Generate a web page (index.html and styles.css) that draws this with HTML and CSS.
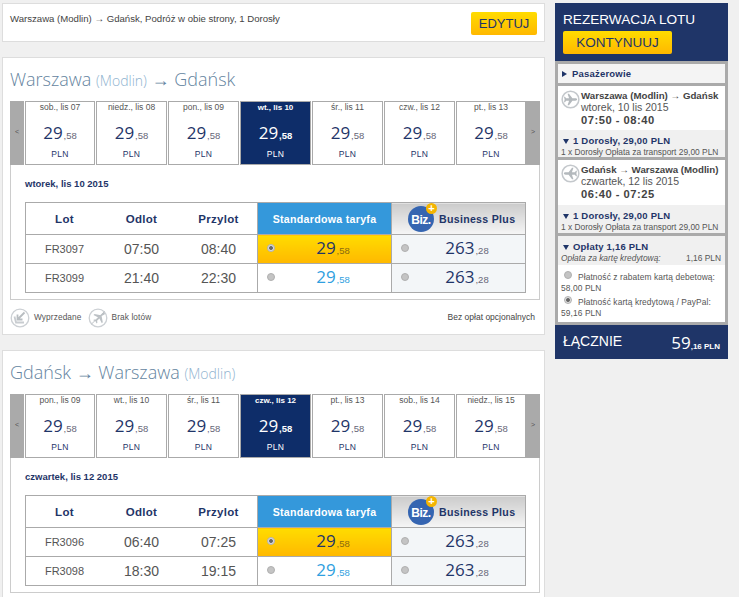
FILE: index.html
```html
<!DOCTYPE html>
<html lang="pl">
<head>
  <meta charset="UTF-8" />
  <title>Rezerwacja lotu</title>
  <link rel="stylesheet" href="styles.css">
</head>
<body>

  <svg class="defs" width="0" height="0">
    <symbol id="plane" viewBox="0 0 20 20">
      <circle cx="10" cy="10" r="8.8" fill="#fff" stroke="#c4c8cc" stroke-width="1.6"/>
      <path fill="#b4b9bd" d="M17 10c0-.7-.9-1.2-2-1.2h-3L8.400 4H6.900l1.600 4.800H5.400L4.200 7.200H3.200l.6 2.800-.6 2.800h1l1.200-1.600h3.100L6.900 16h1.500l3.600-4.800h3c1.100 0 2-.5 2-1.200z"/>
    </symbol>
    <symbol id="sold" viewBox="0 0 20 20">
      <circle cx="10" cy="10" r="8.8" fill="#fff" stroke="#ccd0d4" stroke-width="1.3"/>
      <path fill="none" stroke="#b8bdc1" stroke-width="1.8" d="M14.500 4.500 8 11M7.500 6.500V11.500H12.500"/>
      <path fill="none" stroke="#c8ccd0" stroke-width="1.800" d="M4.500 8.500 6 14.500H14"/>
    </symbol>
    <symbol id="noflight" viewBox="0 0 20 20">
      <circle cx="10" cy="10" r="8.8" fill="#fff" stroke="#ccd0d4" stroke-width="1.3"/>
      <path fill="#bcc1c5" d="M16.500 6.500c.5-.5.5-1.300.1-1.600-.4-.4-1.100-.4-1.600.1l-2.200 2.200L6.500 6l-1 1 4.800 2.400L8 11.700l-2-.3-.8.8 2.300 1.100 1.100 2.300.8-.8-.3-2 2.300-2.300 2.400 4.800 1-1-1.200-6.300z"/>
      <path stroke="#bcc1c5" stroke-width="1" d="M3.500 16 16.500 3.500"/>
    </symbol>
  </svg>

  <div class="page">

    <div class="main">

      <!-- SEARCH SUMMARY -->
      <div class="card summary">
        <span class="summary-text">Warszawa (Modlin) → Gdańsk, Podróż w obie strony, 1 Dorosły</span>
        <a class="btn btn-edit">EDYTUJ</a>
      </div>

      <!-- OUTBOUND -->
      <div class="card route">
        <h2 class="route-title">Warszawa <small>(Modlin)</small> → Gdańsk</h2>

        <div class="strip">
          <div class="strip-arrow">&lt;</div>
          <div class="day"><span class="day-name">sob., lis 07</span><span class="day-price">29<small>,58</small></span><span class="day-cur">PLN</span></div>
          <div class="day"><span class="day-name">niedz., lis 08</span><span class="day-price">29<small>,58</small></span><span class="day-cur">PLN</span></div>
          <div class="day"><span class="day-name">pon., lis 09</span><span class="day-price">29<small>,58</small></span><span class="day-cur">PLN</span></div>
          <div class="day active"><span class="day-name">wt., lis 10</span><span class="day-price">29<small>,58</small></span><span class="day-cur">PLN</span></div>
          <div class="day"><span class="day-name">śr., lis 11</span><span class="day-price">29<small>,58</small></span><span class="day-cur">PLN</span></div>
          <div class="day"><span class="day-name">czw., lis 12</span><span class="day-price">29<small>,58</small></span><span class="day-cur">PLN</span></div>
          <div class="day"><span class="day-name">pt., lis 13</span><span class="day-price">29<small>,58</small></span><span class="day-cur">PLN</span></div>
          <div class="strip-arrow">&gt;</div>
        </div>

        <div class="flights">
          <p class="flights-date">wtorek, lis 10 2015</p>
          <table class="fares">
            <tr>
              <th class="col-info">Lot</th>
              <th class="col-info">Odlot</th>
              <th class="col-info">Przylot</th>
              <th class="head-std">Standardowa taryfa</th>
              <th class="head-biz">
                <div class="biz-head">
                  <span class="biz-logo">Biz.<i class="biz-plus">+</i></span>
                  <span>Business Plus</span>
                </div>
              </th>
            </tr>
            <tr>
              <td class="flight-no">FR3097</td>
              <td class="time">07:50</td>
              <td class="time">08:40</td>
              <td class="fare-std picked"><div class="fare"><span class="radio on"></span><span class="fare-price">29<small>,58</small></span></div></td>
              <td class="fare-biz"><div class="fare"><span class="radio"></span><span class="fare-price">263<small>,28</small></span></div></td>
            </tr>
            <tr>
              <td class="flight-no">FR3099</td>
              <td class="time">21:40</td>
              <td class="time">22:30</td>
              <td class="fare-std"><div class="fare"><span class="radio"></span><span class="fare-price">29<small>,58</small></span></div></td>
              <td class="fare-biz"><div class="fare"><span class="radio"></span><span class="fare-price">263<small>,28</small></span></div></td>
            </tr>
          </table>
        </div>

        <div class="legend">
          <svg class="legend-icon"><use href="#sold"/></svg>
          <span class="legend-label">Wyprzedane</span>
          <svg class="legend-icon"><use href="#noflight"/></svg>
          <span class="legend-label">Brak lotów</span>
          <span class="legend-note">Bez opłat opcjonalnych</span>
        </div>
      </div>

      <!-- RETURN -->
      <div class="card route route-last">
        <h2 class="route-title">Gdańsk → Warszawa <small>(Modlin)</small></h2>

        <div class="strip">
          <div class="strip-arrow">&lt;</div>
          <div class="day"><span class="day-name">pon., lis 09</span><span class="day-price">29<small>,58</small></span><span class="day-cur">PLN</span></div>
          <div class="day"><span class="day-name">wt., lis 10</span><span class="day-price">29<small>,58</small></span><span class="day-cur">PLN</span></div>
          <div class="day"><span class="day-name">śr., lis 11</span><span class="day-price">29<small>,58</small></span><span class="day-cur">PLN</span></div>
          <div class="day active"><span class="day-name">czw., lis 12</span><span class="day-price">29<small>,58</small></span><span class="day-cur">PLN</span></div>
          <div class="day"><span class="day-name">pt., lis 13</span><span class="day-price">29<small>,58</small></span><span class="day-cur">PLN</span></div>
          <div class="day"><span class="day-name">sob., lis 14</span><span class="day-price">29<small>,58</small></span><span class="day-cur">PLN</span></div>
          <div class="day"><span class="day-name">niedz., lis 15</span><span class="day-price">29<small>,58</small></span><span class="day-cur">PLN</span></div>
          <div class="strip-arrow">&gt;</div>
        </div>

        <div class="flights">
          <p class="flights-date">czwartek, lis 12 2015</p>
          <table class="fares">
            <tr>
              <th class="col-info">Lot</th>
              <th class="col-info">Odlot</th>
              <th class="col-info">Przylot</th>
              <th class="head-std">Standardowa taryfa</th>
              <th class="head-biz">
                <div class="biz-head">
                  <span class="biz-logo">Biz.<i class="biz-plus">+</i></span>
                  <span>Business Plus</span>
                </div>
              </th>
            </tr>
            <tr>
              <td class="flight-no">FR3096</td>
              <td class="time">06:40</td>
              <td class="time">07:25</td>
              <td class="fare-std picked"><div class="fare"><span class="radio on"></span><span class="fare-price">29<small>,58</small></span></div></td>
              <td class="fare-biz"><div class="fare"><span class="radio"></span><span class="fare-price">263<small>,28</small></span></div></td>
            </tr>
            <tr>
              <td class="flight-no">FR3098</td>
              <td class="time">18:30</td>
              <td class="time">19:15</td>
              <td class="fare-std"><div class="fare"><span class="radio"></span><span class="fare-price">29<small>,58</small></span></div></td>
              <td class="fare-biz"><div class="fare"><span class="radio"></span><span class="fare-price">263<small>,28</small></span></div></td>
            </tr>
          </table>
        </div>
      </div>

    </div>

    <!-- BOOKING SIDEBAR -->
    <div class="side">
      <div class="side-head">
        <div class="side-title">REZERWACJA LOTU</div>
        <a class="btn btn-next">KONTYNUUJ</a>
      </div>

      <div class="side-body">
        <div class="side-pax"><span class="tri-right"></span>Pasażerowie</div>

        <div class="leg">
          <div class="leg-top">
            <svg class="leg-icon"><use href="#plane"/></svg>
            <div>
              <div class="leg-route">Warszawa (Modlin) → Gdańsk</div>
              <div class="leg-date">wtorek, 10 lis 2015</div>
              <div class="leg-time">07:50 - 08:40</div>
            </div>
          </div>
          <div class="leg-price">
            <div class="price-head"><span class="tri-down"></span>1 Dorosły, 29,00 PLN</div>
            <div class="price-sub">1 x Dorosły Opłata za transport 29,00 PLN</div>
          </div>
        </div>

        <div class="leg">
          <div class="leg-top leg-top-tall">
            <svg class="leg-icon flip"><use href="#plane"/></svg>
            <div>
              <div class="leg-route">Gdańsk → Warszawa (Modlin)</div>
              <div class="leg-date">czwartek, 12 lis 2015</div>
              <div class="leg-time">06:40 - 07:25</div>
            </div>
          </div>
          <div class="leg-price leg-price-tall">
            <div class="price-head"><span class="tri-down"></span>1 Dorosły, 29,00 PLN</div>
            <div class="price-sub">1 x Dorosły Opłata za transport 29,00 PLN</div>
          </div>
        </div>

        <div class="fees">
          <div class="price-head"><span class="tri-down"></span>Opłaty 1,16 PLN</div>
          <div class="fees-row"><em>Opłata za kartę kredytową:</em><span>1,16 PLN</span></div>
          <div class="pay">
            <div class="pay-line"><span class="radio"></span>Płatność z rabatem kartą debetową:</div>
            <div class="pay-amount">58,00 PLN</div>
            <div class="pay-line pay-line-next"><span class="radio on"></span>Płatność kartą kredytową / PayPal:</div>
            <div class="pay-amount">59,16 PLN</div>
          </div>
        </div>
      </div>

      <div class="total">
        <span class="total-label">ŁĄCZNIE</span>
        <span class="total-price">59<small>,16 PLN</small></span>
      </div>
    </div>

  </div>

</body>
</html>
```

FILE: styles.css
```css
/* ------------------------------
   GENERAL
-------------------------------*/
html, body {
  margin: 0;
  padding: 0;
  height: 597px;
  overflow: hidden;
}
body {
  background: #f0f0f0;
  font-family: "Liberation Sans", Arial, sans-serif;
  color: #555;
}
.defs {
  position: absolute;
}
.page {
  display: flex;
  align-items: flex-start;
  gap: 10px;
  padding: 3px 0 0 2px;
}
.main {
  width: 543px;
  display: flex;
  flex-direction: column;
  flex-shrink: 0;
}
.card {
  background: #fff;
  border: 1px solid #ddd;
  box-sizing: border-box;
}

/* ---------------
   BUTTONS
   ---------------*/
.btn {
  display: block;
  box-sizing: border-box;
  height: 23px;
  line-height: 24px;
  text-align: center;
  color: #1f3568;
  border-radius: 2px;
  background: linear-gradient(#ffdc00, #ffb800);
}

/* ---------------
   SUMMARY
   ---------------*/
.summary {
  height: 39px;
  display: flex;
  justify-content: space-between;
  padding: 8px 7px 0 7px;
  margin-bottom: 15px;
}
.summary-text {
  font-size: 9.600px;
  line-height: 13px;
  color: #444;
}
.btn-edit {
  width: 66px;
  font-size: 13px;
}

/* ---------------
   ROUTE CARD
   ---------------*/
.route {
  height: 278px;
  padding: 0 4px 0 7px;
  margin-bottom: 15px;
}
.route-last {
  height: 247px;
  margin-bottom: 0;
  border-bottom: 0;
}
.route-title {
  margin: 0;
  height: 43px;
  padding-top: 8px;
  box-sizing: border-box;
  font-family: "Open Sans", sans-serif;
  font-weight: 300;
  font-size: 18px;
  line-height: 26px;
  color: #6484a0;
}
.route-title small {
  font-size: 14px;
  color: #8fb3cf;
}

/* date strip */
.strip {
  display: flex;
  height: 64px;
}
.strip-arrow {
  width: 14px;
  flex-shrink: 0;
  background: #aaa;
  color: #555;
  font-size: 7px;
  text-align: center;
  line-height: 62px;
}
.strip-arrow:first-child {
  margin-right: 1px;
}
.day {
  width: 71px;
  margin-right: 1px;
  box-sizing: border-box;
  border: 1px solid #aaa;
  background: #fff;
  display: flex;
  flex-direction: column;
  align-items: center;
}
.day:nth-child(2) {
  width: 70px;
}
.day:nth-child(8) {
  width: 70px;
  margin-right: 0;
}
.day-name {
  font-size: 8.500px;
  line-height: 11px;
}
.day-price {
  font-family: "Open Sans", sans-serif;
  font-size: 17px;
  line-height: 22px;
  color: #1f3568;
  margin-top: 9px;
}
.day-price small {
  font-family: "Liberation Sans", sans-serif;
  font-size: 9.500px;
  color: #667;
  margin-left: 1px;
}
.day-cur {
  font-size: 8.500px;
  line-height: 11px;
  letter-spacing: 0.3px;
  color: #1f3568;
  margin-top: 2px;
}
.day.active {
  background: #0e2d69;
  color: #fff;
}
.day.active .day-name {
  font-weight: bold;
  font-size: 8px;
}
.day.active .day-price,
.day.active .day-cur {
  color: #fff;
}
.day.active .day-price small {
  color: #fff;
  font-weight: bold;
}

/* flights table */
.flights {
  width: 530px;
  box-sizing: border-box;
  height: 135px;
  border: 1px solid #ccc;
  border-top: 0;
  padding: 0 13px 0 14px;
}
.flights-date {
  margin: 0;
  height: 37px;
  padding-top: 13px;
  box-sizing: border-box;
  font-size: 9.500px;
  line-height: 12px;
  font-weight: bold;
  color: #1f3568;
}
.fares {
  border-collapse: collapse;
  table-layout: fixed;
  width: 501px;
}
.fares th, .fares td {
  border: 1px solid #aaa;
  padding: 0;
  text-align: center;
}
.fares th {
  height: 31px;
  font-size: 11.500px;
  letter-spacing: 0.3px;
  color: #1f3568;
}
.fares td {
  height: 28px;
}
.fares .col-info {
  width: 77px;
  border-right: 0;
}
.fares .col-info + .col-info {
  border-left: 0;
}
.fares td.flight-no, .fares td.time {
  border-right: 0;
  border-left: 0;
}
.fares td.flight-no {
  border-left: 1px solid #aaa;
}
.fares .head-std {
  width: 133px;
  background: #3498db;
  color: #fff;
  font-size: 10.600px;
}
.fares .head-biz {
  background: linear-gradient(#cbcbcb, #f6f6f6);
  font-size: 10.600px;
}
.biz-head {
  display: flex;
  align-items: center;
  gap: 5px;
  padding-left: 16px;
  padding-top: 1px;
}
.biz-logo {
  position: relative;
  display: block;
  width: 26px;
  height: 26px;
  border-radius: 50%;
  background: #3565b1;
  color: #fff;
  font-size: 12px;
  letter-spacing: -0.5px;
  line-height: 28px;
  text-align: center;
}
.biz-plus {
  position: absolute;
  top: -3px;
  right: -3px;
  width: 11px;
  height: 11px;
  border-radius: 50%;
  background: #f4b400;
  font-style: normal;
  font-size: 11px;
  font-weight: bold;
  line-height: 10px;
  letter-spacing: 0;
  color: #fff;
}
.flight-no {
  font-size: 11px;
  color: #555;
}
.time {
  font-size: 14px;
  color: #555;
}
.picked {
  background: linear-gradient(#ffdc00, #ffb800);
}
.fare-biz {
  background: #f3f6f8;
}
.fare {
  display: flex;
  align-items: center;
  padding-left: 9px;
}
.fare-price {
  flex: 1;
  font-family: "Open Sans", sans-serif;
  font-size: 17px;
  line-height: 22px;
  color: #1f3568;
}
.fare-price small {
  font-family: "Liberation Sans", sans-serif;
  font-size: 9.500px;
  color: #667;
  margin-left: 1px;
}
.fare-std:not(.picked) .fare-price,
.fare-std:not(.picked) .fare-price small {
  color: #2f9fe0;
}
.picked .fare-price small {
  color: #8a6a10;
}
.radio {
  display: block;
  flex-shrink: 0;
  box-sizing: border-box;
  width: 8px;
  height: 8px;
  border-radius: 50%;
  background: #c4c4c4;
  border: 1px solid #b0b0b0;
  margin-bottom: 2px;
}
.radio.on {
  background: radial-gradient(circle, #666 0 1.500px, #ddd 2.300px);
}

/* legend */
.legend {
  display: flex;
  align-items: center;
  height: 33px;
  padding: 2px 5px 0 0;
  box-sizing: border-box;
}
.legend-icon {
  width: 20px;
  height: 20px;
}
.legend-label {
  font-size: 8.300px;
  margin: 0 6px 2px 4px;
  letter-spacing: 0.1px;
}
.legend-note {
  margin-left: auto;
  font-size: 8.500px;
  margin-bottom: 2px;
  color: #444;
}

/* ---------------
   SIDEBAR
   ---------------*/
.side {
  width: 173px;
  flex-shrink: 0;
}
.side-head {
  height: 58px;
  box-sizing: border-box;
  background: #1f3568;
  padding: 9px 8px 0 8px;
}
.side-title {
  color: #fff;
  font-size: 13.600px;
  line-height: 16px;
  margin-bottom: 3px;
}
.btn-next {
  width: 109px;
  font-size: 13.500px;
}
.side-body {
  background: #aaa;
  padding: 3px;
  display: flex;
  flex-direction: column;
  gap: 3px;
}
.side-pax {
  height: 19px;
  background: #f4f4f4;
  font-size: 9.500px;
  line-height: 19px;
  font-weight: bold;
  letter-spacing: 0.2px;
  color: #1f3568;
  display: flex;
  align-items: center;
}
.tri-right {
  width: 0;
  height: 0;
  margin: 1px 5px 0 4px;
  border-left: 5px solid #1f3568;
  border-top: 3px solid transparent;
  border-bottom: 3px solid transparent;
}
.tri-down {
  display: inline-block;
  width: 0;
  height: 0;
  margin: 0 4px 0 5px;
  border-top: 5px solid #1f3568;
  border-left: 3px solid transparent;
  border-right: 3px solid transparent;
}
.leg {
  background: #fff;
}
.leg-top {
  height: 44px;
  box-sizing: border-box;
  display: flex;
  gap: 1px;
  padding: 4px 0 0 3px;
}
.leg-top-tall {
  height: 45px;
}
.leg-icon {
  width: 19px;
  height: 19px;
  flex-shrink: 0;
}
.leg-icon.flip {
  transform: scaleX(-1);
}
.leg-route {
  font-size: 9.700px;
  line-height: 12px;
  font-weight: bold;
  color: #444;
  white-space: nowrap;
}
.leg-date {
  font-size: 10.500px;
  line-height: 11px;
}
.leg-time {
  font-size: 11.200px;
  line-height: 15px;
  font-weight: bold;
  letter-spacing: 0.5px;
  color: #444;
}
.leg-price {
  height: 27px;
  background: #f0f0f0;
  padding-top: 4px;
  box-sizing: border-box;
}
.leg-price-tall {
  height: 28px;
}
.price-head {
  font-size: 9.500px;
  line-height: 13px;
  font-weight: bold;
  letter-spacing: 0.2px;
  color: #1f3568;
}
.price-sub {
  font-size: 8.400px;
  line-height: 9px;
  padding-left: 3px;
  margin-top: 1px;
  white-space: nowrap;
}
.fees {
  background: #f0f0f0;
  padding-top: 4px;
}
.fees-row {
  display: flex;
  justify-content: space-between;
  font-size: 8.400px;
  line-height: 11px;
  padding: 0 4px 0 3px;
  height: 12px;
}
.pay {
  background: #fff;
  height: 57px;
  box-sizing: border-box;
  padding-top: 7px;
  font-size: 8.400px;
  letter-spacing: 0.1px;
  white-space: nowrap;
}
.pay-line {
  display: flex;
  align-items: flex-start;
  padding-left: 6px;
  line-height: 11px;
  height: 11px;
}
.pay-line-next {
  margin-top: 3px;
}
.pay-line .radio {
  margin: -1px 6px 0 0;
}
.pay-amount {
  line-height: 11px;
  height: 11px;
  padding-left: 3px;
}
.total {
  height: 34px;
  background: #1f3568;
  display: flex;
  justify-content: space-between;
  align-items: center;
  padding: 0 8px;
  box-sizing: border-box;
  color: #fff;
}
.total-label {
  font-size: 14px;
  margin-bottom: 2px;
}
.total-price {
  font-family: "Open Sans", sans-serif;
  font-size: 17px;
}
.total-price small {
  font-family: "Liberation Sans", sans-serif;
  font-size: 8px;
  font-weight: bold;
}
```
